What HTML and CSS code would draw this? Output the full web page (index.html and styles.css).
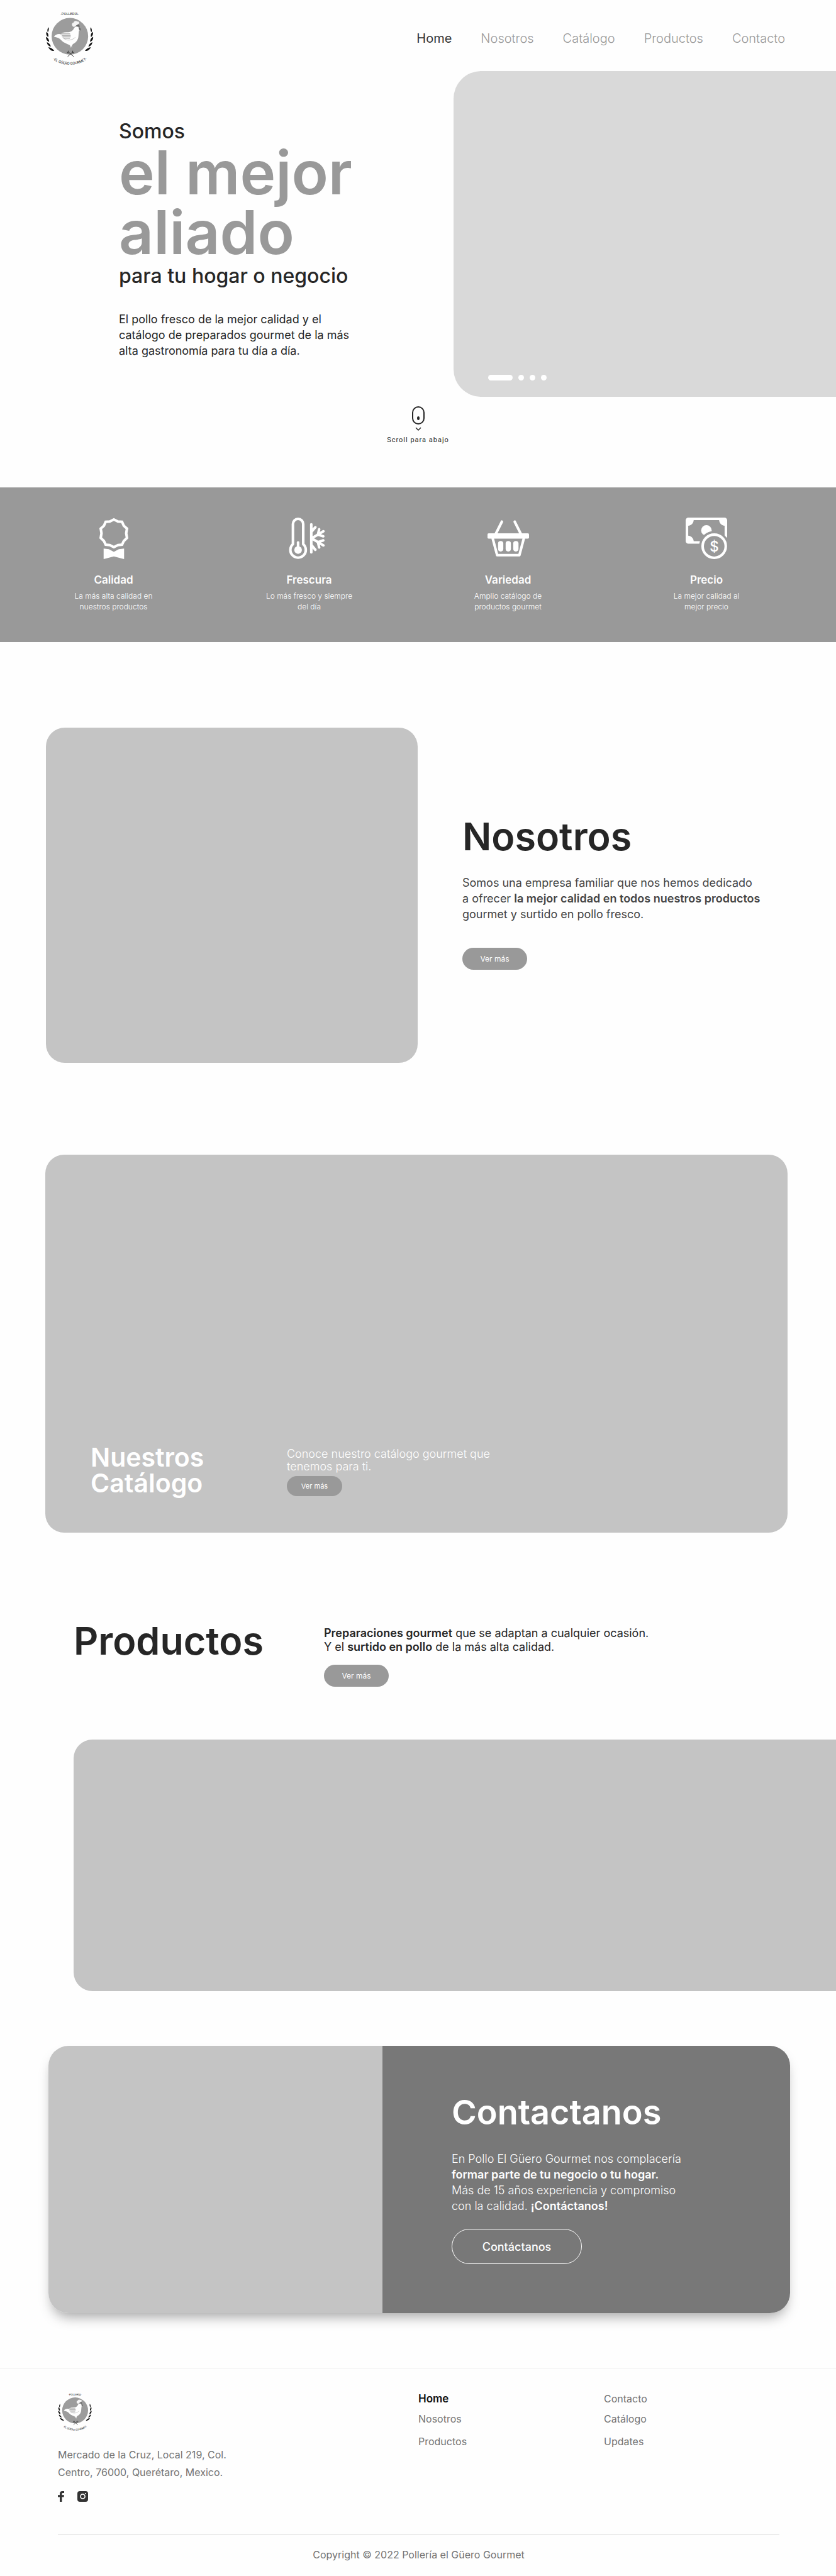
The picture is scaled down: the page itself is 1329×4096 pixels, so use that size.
FILE: index.html
```html
<!DOCTYPE html>
<html lang="es">
<head>
<meta charset="utf-8">
<meta name="viewport" content="width=device-width, initial-scale=1">
<title>Pollería El Güero Gourmet</title>
<link rel="stylesheet" href="styles.css">
</head>
<body>
<svg class="sprite" aria-hidden="true">
  <defs>
    <path id="arc-bottom" d="M68 290A157 157 0 0 0 292 290"/>
    <g id="laurel">
      <path d="M68 139C61 147 60 158 64 166C69 158 71 148 68 139Z"/>
      <path d="M57 163C53 174 57 184 66 191C69 180 66 170 57 163Z"/>
      <path d="M55 190C53 202 60 212 71 217C71 205 66 196 55 190Z"/>
      <path d="M59 218C60 230 68 239 80 241C77 230 70 222 59 218Z"/>
      <path d="M67 244C72 257 84 265 98 264C91 253 80 246 67 244Z"/>
    </g>
  </defs>
  <symbol id="logo" viewBox="52 46 252 304">
    <text class="logo-text" x="179" y="76" font-size="19" text-anchor="middle">-POLLERÍA-</text>
    <circle cx="180" cy="187" r="96" fill="#9c9c9c"/>
    <use href="#laurel" fill="#111"/>
    <use href="#laurel" fill="#111" transform="translate(357 0) scale(-1 1)"/>
    <path fill="#fefefe" d="M96 190C104 178 120 172 134 177C138 168 150 166 164 166C184 166 192 160 199 150C203 140 210 134 218 137C226 139 229 144 230 150L234 155L228 157C226 168 226 176 225 186C224 206 212 220 198 227C190 232 189 240 191 250L186 236L184 248L180 234C170 228 146 222 134 207C126 197 112 192 96 190Z"/>
    <path fill="none" stroke="#9c9c9c" stroke-width="4" d="M140 174H181M140 182H184M143 190H184M147 198H180"/>
    <path fill="none" stroke="#9c9c9c" stroke-width="2" d="M137 172C136 196 156 208 176 207C190 206 202 200 208 192"/>
    <path fill="#f4f4f4" d="M193 132C188 124 192 116 199 115C202 106 213 104 219 110C228 108 232 116 226 123L220 128L206 136C201 139 195 137 193 132Z"/>
    <path fill="#6b6b6b" d="M208 135C214 129 219 126 226 124C230 128 232 134 231 140C224 134 216 134 208 135ZM227 141C234 140 238 147 237 156C232 158 228 154 227 148Z"/>
    <path fill="none" stroke="#222" stroke-width="3" d="M168 294L194 270M200 294L173 270M166 268L168 275L176 274M172 263L174 271M202 268L198 275L191 272M195 263L193 271"/>
    <text class="logo-text" font-size="19" text-anchor="middle"><textPath href="#arc-bottom" startOffset="50%">-EL GÜERO GOURMET-</textPath></text>
  </symbol>
</svg>

<header class="header">
  <a href="#home" aria-label="Pollería El Güero Gourmet"><svg class="logo"><use href="#logo"/></svg></a>
  <nav class="nav">
    <a class="active" href="#home">Home</a>
    <a href="#nosotros">Nosotros</a>
    <a href="#catalogo">Catálogo</a>
    <a href="#productos">Productos</a>
    <a href="#contacto">Contacto</a>
  </nav>
</header>

<main>
  <section class="hero" id="home">
    <div class="hero-text">
      <h1>
        <span class="hero-small">Somos</span>
        <span class="hero-big">el mejor<br>aliado</span>
        <span class="hero-small hero-end">para tu hogar o negocio</span>
      </h1>
      <p class="text">El pollo fresco de la mejor calidad y el<br>catálogo de preparados gourmet de la más<br>alta gastronomía para tu día a día.</p>
    </div>
    <div class="hero-image">
      <div class="dots">
        <button class="dot current" type="button" aria-label="1"></button>
        <button class="dot" type="button" aria-label="2"></button>
        <button class="dot" type="button" aria-label="3"></button>
        <button class="dot" type="button" aria-label="4"></button>
      </div>
    </div>
  </section>

  <a class="scroll" href="#ventajas">
    <svg width="20" height="40" viewBox="0 0 20 40" fill="none" stroke="#262626">
      <rect x="1" y="1" width="18" height="27" rx="9" stroke-width="2"/>
      <ellipse cx="10" cy="19" rx="2" ry="3" fill="#262626" stroke="none"/>
      <path d="M6 34L10 38L14 34" stroke-width="1.5"/>
    </svg>
    <span>Scroll para abajo</span>
  </a>

  <section class="features" id="ventajas">
    <article class="feature">
      <svg viewBox="0 0 71 71">
        <path fill="none" stroke="#fff" stroke-width="4.4" d="M35.5 3.2L42.5 6.7L49.5 7.3L52.5 14L58 18.8L56.6 26.8L58 34.8L52.5 40L49.5 46.4L42.5 47L35.5 50.6L28.5 47L21.5 46.4L18.5 40L13 34.8L14.4 26.8L13 18.8L18.5 14L21.5 7.3L28.5 6.7Z"/>
        <path fill="#fff" d="M18 53L27 54L35.5 58.5L44 54L53 53V71L35.5 66.5L18 71Z"/>
      </svg>
      <h2>Calidad</h2>
      <p>La más alta calidad en<br>nuestros productos</p>
    </article>
    <article class="feature">
      <svg viewBox="4 0 71 71" fill="none" stroke="#fff" stroke-width="4.4" stroke-linecap="round" stroke-linejoin="round">
        <path d="M11.2 11A8.8 8.8 0 0 1 28.8 11V45.5A13.2 13.2 0 1 1 11.2 45.5Z"/>
        <path d="M20 42.5V52"/><circle cx="20" cy="55.5" r="6.5" fill="#fff" stroke="none"/>
        <path d="M42.6 11.5V59.5M43 24L49.5 16.5M43 47L49.5 55M43 35.5L63.3 23.5M43 35.5L63.3 47.5M54 29L56 20M54 29L63 32M54 42L56 51M54 42L63 39"/>
      </svg>
      <h2>Frescura</h2>
      <p>Lo más fresco y siempre<br>del día</p>
    </article>
    <article class="feature">
      <svg viewBox="0 0 71 71" fill="none" stroke="#fff" stroke-width="4.4" stroke-linecap="round" stroke-linejoin="round">
        <path d="M24.6 7L13.5 29M46.5 7L57.5 29M9 36L16.5 64.3H54.5L62 36"/>
        <rect x="0" y="27" width="71" height="9" rx="2" fill="#fff" stroke="none"/>
        <g fill="#fff" stroke="none"><rect x="18" y="40" width="9" height="18" rx="4.4"/><rect x="31" y="40" width="9" height="18" rx="4.4"/><rect x="44" y="40" width="9" height="18" rx="4.4"/></g>
      </svg>
      <h2>Variedad</h2>
      <p>Amplio catálogo de<br>productos gourmet</p>
    </article>
    <article class="feature">
      <svg viewBox="0 0 71 71">
        <rect x="2.2" y="2.2" width="66.6" height="40.3" rx="2.5" fill="none" stroke="#fff" stroke-width="4.4"/>
        <path fill="#fff" d="M2 2H13.5A10 10 0 0 1 4 14ZM69 2H57.5A10 10 0 0 0 67 14ZM2 43H13.5A10 10 0 0 0 4 31Z"/>
        <circle cx="35.5" cy="22" r="9" fill="#fff"/>
        <path fill="#999" d="M23 46L25 38A26 26 0 0 1 68 32L72 36V71H23Z"/>
        <circle cx="48.8" cy="49" r="19.8" fill="#999" stroke="#fff" stroke-width="4.4"/>
        <text class="coin" x="48.8" y="58" text-anchor="middle">$</text>
      </svg>
      <h2>Precio</h2>
      <p>La mejor calidad al<br>mejor precio</p>
    </article>
  </section>

  <section class="about" id="nosotros">
    <div class="about-image"></div>
    <div class="about-text">
      <h2 class="title">Nosotros</h2>
      <p class="text">Somos una empresa familiar que nos hemos dedicado<br>a ofrecer <strong>la mejor calidad en todos nuestros productos</strong><br>gourmet y surtido en pollo fresco.</p>
      <button class="button" type="button">Ver más</button>
    </div>
  </section>

  <section class="catalog" id="catalogo">
    <h2>Nuestros<br>Catálogo</h2>
    <div>
      <p>Conoce nuestro catálogo gourmet que<br>tenemos para ti.</p>
      <button class="button small" type="button">Ver más</button>
    </div>
  </section>

  <section class="products" id="productos">
    <h2 class="title">Productos</h2>
    <div class="products-text">
      <p><strong>Preparaciones gourmet</strong> que se adaptan a cualquier ocasión.<br>Y el <strong>surtido en pollo</strong> de la más alta calidad.</p>
      <button class="button" type="button">Ver más</button>
    </div>
  </section>
  <div class="products-image"></div>

  <section class="contact" id="contacto">
    <div class="contact-image"></div>
    <div class="contact-panel">
      <h2>Contactanos</h2>
      <p class="text">En Pollo El Güero Gourmet nos complacería<br><strong>formar parte de tu negocio o tu hogar.</strong><br>Más de 15 años experiencia y compromiso<br>con la calidad. <strong>¡Contáctanos!</strong></p>
      <button class="outline" type="button">Contáctanos</button>
    </div>
  </section>
</main>

<footer class="footer">
  <div class="footer-grid">
    <div>
      <svg class="logo footer-logo"><use href="#logo"/></svg>
      <address>Mercado de la Cruz, Local 219, Col.<br>Centro, 76000, Querétaro, Mexico.</address>
      <div class="social">
        <a href="#facebook" aria-label="Facebook"><svg width="10" height="17" viewBox="0 0 10 17"><path fill="#333" d="M3 17V9.500H0V6.300H3V4.200C3 1.500 4.500 0 7.200 0H10V3H8.200C7 3 6.500 3.500 6.500 4.500V6.300H10L9.500 9.500H6.500V17Z"/></svg></a>
        <a href="#instagram" aria-label="Instagram"><svg width="17" height="17" viewBox="0 0 17 17"><rect width="17" height="17" rx="4" fill="#333"/><circle cx="8.500" cy="8.500" r="3.600" fill="none" stroke="#fefefe" stroke-width="1.600"/><circle cx="13" cy="4" r="1.100" fill="#fefefe"/></svg></a>
      </div>
    </div>
    <ul>
      <li><a class="active" href="#home">Home</a></li>
      <li><a href="#nosotros">Nosotros</a></li>
      <li><a href="#productos">Productos</a></li>
    </ul>
    <ul>
      <li><a href="#contacto">Contacto</a></li>
      <li><a href="#catalogo">Catálogo</a></li>
      <li><a href="#updates">Updates</a></li>
    </ul>
  </div>
  <p class="copyright">Copyright © 2022 Pollería el Güero Gourmet</p>
</footer>
</body>
</html>
```
FILE: styles.css
```css
* { box-sizing: border-box; }
body { margin: 0; background: #fefefe; color: #262626; font-family: Inter, "Liberation Sans", sans-serif; font-size: 18px; overflow-x: hidden; }
h1, h2, p, ul { margin: 0; padding: 0; font-weight: 400; }
ul { list-style: none; }
a { color: inherit; text-decoration: none; }
svg { display: block; }
button { border: 0; padding: 0; font-family: inherit; cursor: pointer; }
strong { font-weight: 600; }
.sprite { position: absolute; width: 0; height: 0; }

.header { display: flex; justify-content: space-between; align-items: center; padding: 15px 81px 6px 72px; }
.logo { width: 77px; height: 92px; }
.logo-text { font-family: "Liberation Sans Narrow", "Roboto", sans-serif; fill: #222; }
.nav { display: flex; gap: 46px; font-size: 20px; line-height: 24px; font-weight: 300; color: #999; }
.nav .active { color: #333; font-weight: 400; }

.hero { display: grid; grid-template-columns: 721fr 608fr; }
.hero-text { padding: 78px 0 0 189px; white-space: nowrap; }
.hero h1 span { display: block; }
.hero-small { font-size: 32px; line-height: 36px; font-weight: 500; }
.hero-big { font-size: 96px; line-height: 95px; font-weight: 600; color: #999; }
.hero-end { margin-top: 4px; }
.text { font-size: 18px; line-height: 25px; }
.hero-text .text { margin-top: 38px; }
.hero-image { display: flex; align-items: flex-end; min-height: 518px; padding: 0 0 26px 55px; border-radius: 44px 0 0 44px; background: #d9d9d9; }
.dots { display: flex; gap: 9px; }
.dot { width: 9px; height: 9px; border-radius: 5px; background: #fff; }
.dot.current { width: 39px; }

.scroll { display: flex; flex-direction: column; align-items: center; gap: 6px; padding: 15px 0 67px; font: 11px/16px Roboto, sans-serif; letter-spacing: 1px; }

.features { display: grid; grid-template-columns: 311fr 311fr 321fr 310fr; padding: 48px 51px 48px 25px; background: #999; color: #fff; text-align: center; }
.feature svg { width: 66px; height: 66px; margin: 0 auto 21px; }
.feature h2 { font-size: 17px; line-height: 24px; font-weight: 600; }
.feature p { margin-top: 5px; font-size: 12px; line-height: 17px; font-weight: 300; }
.coin { font: 500 24px Inter, sans-serif; fill: #fff; }

.title { font-size: 61px; line-height: 70px; font-weight: 600; }
.button { width: 103px; height: 35px; border-radius: 18px; background: #999; color: #fff; font-size: 12px; }
.button.small { width: 88px; height: 32px; font-size: 11px; }

.about { display: grid; grid-template-columns: 591fr 518fr; column-gap: 71px; align-items: center; margin: 136px 76px 0 73px; }
.about-image { min-height: 533px; border-radius: 30px; background: #c4c4c4; }
.about-text { padding-bottom: 11px; white-space: nowrap; }
.about-text .text { margin: 26px 0 41px; color: #444; }

.catalog { display: grid; grid-template-columns: 312px 1fr; align-items: end; min-height: 601px; margin: 146px 77px 0 72px; padding: 0 72px 58px; border-radius: 30px; background: #c4c4c4; color: #fff; }
.catalog h2 { font-size: 41px; line-height: 41px; font-weight: 600; }
.catalog p { margin-bottom: 5px; line-height: 20px; font-weight: 300; }

.products { display: grid; grid-template-columns: 398px 1fr; margin: 137px 76px 0 117px; }
.products-text { padding-top: 12px; }
.products-text p { margin-bottom: 17px; line-height: 22px; }
.products-image { min-height: 400px; margin: 84px 0 0 117px; border-radius: 30px 0 0 30px; background: #c4c4c4; }

.contact { display: grid; grid-template-columns: 531fr 648fr; margin: 87px 73px 0 77px; border-radius: 32px; overflow: hidden; color: #fff; box-shadow: 0 12px 20px -6px rgba(0, 0, 0, .35); }
.contact-image { background: #c4c4c4; }
.contact-panel { padding: 76px 20px 78px 110px; background: #787878; }
.contact h2 { font-size: 54px; line-height: 60px; font-weight: 600; }
.contact .text { margin: 31px 0 24px; font-weight: 300; }
.contact strong { font-weight: 600; }
.outline { width: 207px; height: 56px; border: 1px solid #fff; border-radius: 28px; background: transparent; color: #fff; font-size: 18px; font-weight: 500; }

.footer { margin-top: 87px; padding: 36px 90px 22px 92px; border-top: 1px solid #ebebeb; color: #737373; font-size: 16px; }
.footer-grid { display: grid; grid-template-columns: 573fr 295fr 279fr; padding-bottom: 51px; border-bottom: 1px solid #d9d9d9; }
.footer-logo { width: 54px; height: 66px; }
address { margin-top: 21px; font-style: normal; line-height: 28px; }
.social { display: flex; gap: 21px; margin-top: 16px; }
.footer li { margin-bottom: 12px; line-height: 24px; }
.footer li:first-child { margin-bottom: 8px; }
.footer .active { color: #111; font-weight: 600; font-size: 17px; }
.copyright { margin-top: 20px; line-height: 24px; text-align: center; }
```
